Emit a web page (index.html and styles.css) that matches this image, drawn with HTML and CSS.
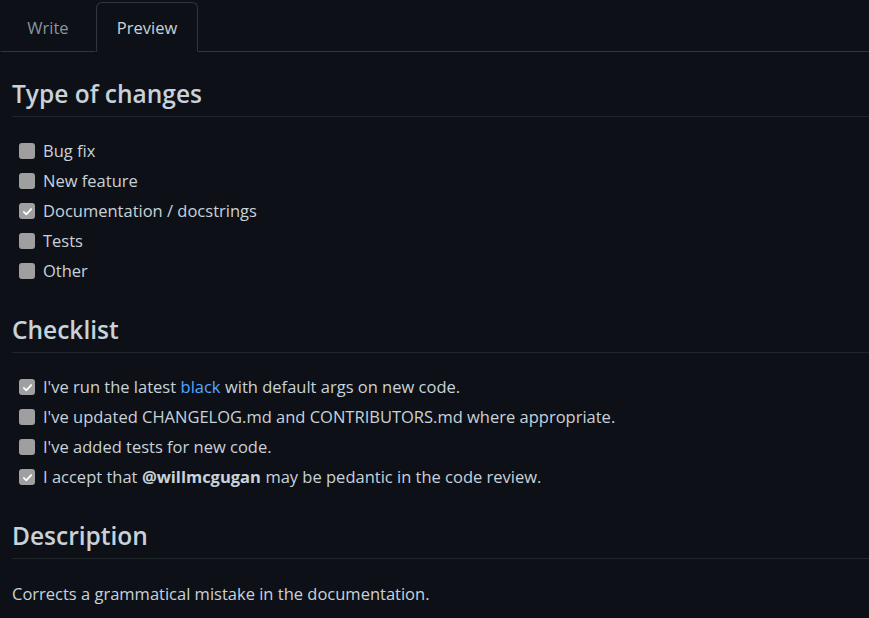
FILE: index.html
```html
<!DOCTYPE html>
<html>
<head>
<meta charset="utf-8">
<link rel="stylesheet" href="styles.css">
</head>
<body>
<div class="tabs">
  <div class="tab">Write</div>
  <div class="tab active">Preview</div>
  <div class="tab-fill"></div>
</div>
<div class="body">
  <h2>Type of changes</h2>
  <ul class="tasks">
    <li><span class="cb"></span>Bug fix</li>
    <li><span class="cb"></span>New feature</li>
    <li><span class="cb checked"><svg viewBox="0 0 16 16" width="16" height="16"><path d="M3.5 8.5l3 3 6-6.5" fill="none" stroke="#fff" stroke-width="2.2" stroke-linecap="round" stroke-linejoin="round"/></svg></span>Documentation / docstrings</li>
    <li><span class="cb"></span>Tests</li>
    <li><span class="cb"></span>Other</li>
  </ul>
  <h2>Checklist</h2>
  <ul class="tasks">
    <li><span class="cb checked"><svg viewBox="0 0 16 16" width="16" height="16"><path d="M3.5 8.5l3 3 6-6.5" fill="none" stroke="#fff" stroke-width="2.2" stroke-linecap="round" stroke-linejoin="round"/></svg></span>I've run the latest <a class="link">black</a> with default args on new code.</li>
    <li><span class="cb"></span>I've updated CHANGELOG.md and CONTRIBUTORS.md where appropriate.</li>
    <li><span class="cb"></span>I've added tests for new code.</li>
    <li><span class="cb checked"><svg viewBox="0 0 16 16" width="16" height="16"><path d="M3.5 8.5l3 3 6-6.5" fill="none" stroke="#fff" stroke-width="2.2" stroke-linecap="round" stroke-linejoin="round"/></svg></span>I accept that <strong>@willmcgugan</strong> may be pedantic in the code review.</li>
  </ul>
  <h2>Description</h2>
  <p>Corrects a grammatical mistake in the documentation.</p>
</div>
</body>
</html>
```
FILE: styles.css
```css
html, body {
  margin: 0;
  padding: 0;
  background: #0d1117;
  color: #c9d1d9;
  font-family: "Open Sans", "Noto Sans", sans-serif;
  font-size: 16.5px;
}
.tabs {
  display: flex;
  align-items: flex-end;
  height: 52px;
  box-sizing: border-box;
  padding-top: 2px;
}
.tab {
  height: 50px;
  box-sizing: border-box;
  display: flex;
  align-items: center;
  justify-content: center;
  font-size: 16.5px;
  color: #8b949e;
  border: 1px solid transparent;
  border-bottom: 1px solid #30363d;
  border-radius: 6px 6px 0 0;
  width: 96px;
}
.tab.active {
  width: 102px;
  color: #c9d1d9;
  border-color: #30363d;
  border-bottom-color: transparent;
}
.tab-fill {
  flex: 1;
  height: 50px;
  border-bottom: 1px solid #30363d;
  box-sizing: border-box;
}
.body {
  padding: 0 0 0 12px;
}
h2 {
  margin: 31px 0 0;
  font-size: 24.5px;
  font-weight: 600;
  line-height: 32px;
  padding-bottom: 6px;
  border-bottom: 1px solid #21262d;
}
h2:first-child {
  margin-top: 26px;
}
.tasks {
  list-style: none;
  margin: 22px 0 0;
  padding: 0 0 0 7px;
  display: flex;
  flex-direction: column;
  gap: 6px;
}
.tasks li {
  display: flex;
  align-items: center;
  height: 24px;
  line-height: 24px;
}
.cb {
  width: 16px;
  height: 16px;
  border-radius: 3px;
  background: #9f9f9f;
  margin-right: 8px;
  flex: none;
  display: flex;
  align-items: center;
  justify-content: center;
}
.cb svg {
  width: 13px;
  height: 13px;
}
.link {
  color: #58a6ff;
  margin: 0 0.27em;
}
strong {
  font-weight: 700;
  margin: 0 0.27em;
}
p {
  margin: 23px 0 0;
  line-height: 24px;
}
```
